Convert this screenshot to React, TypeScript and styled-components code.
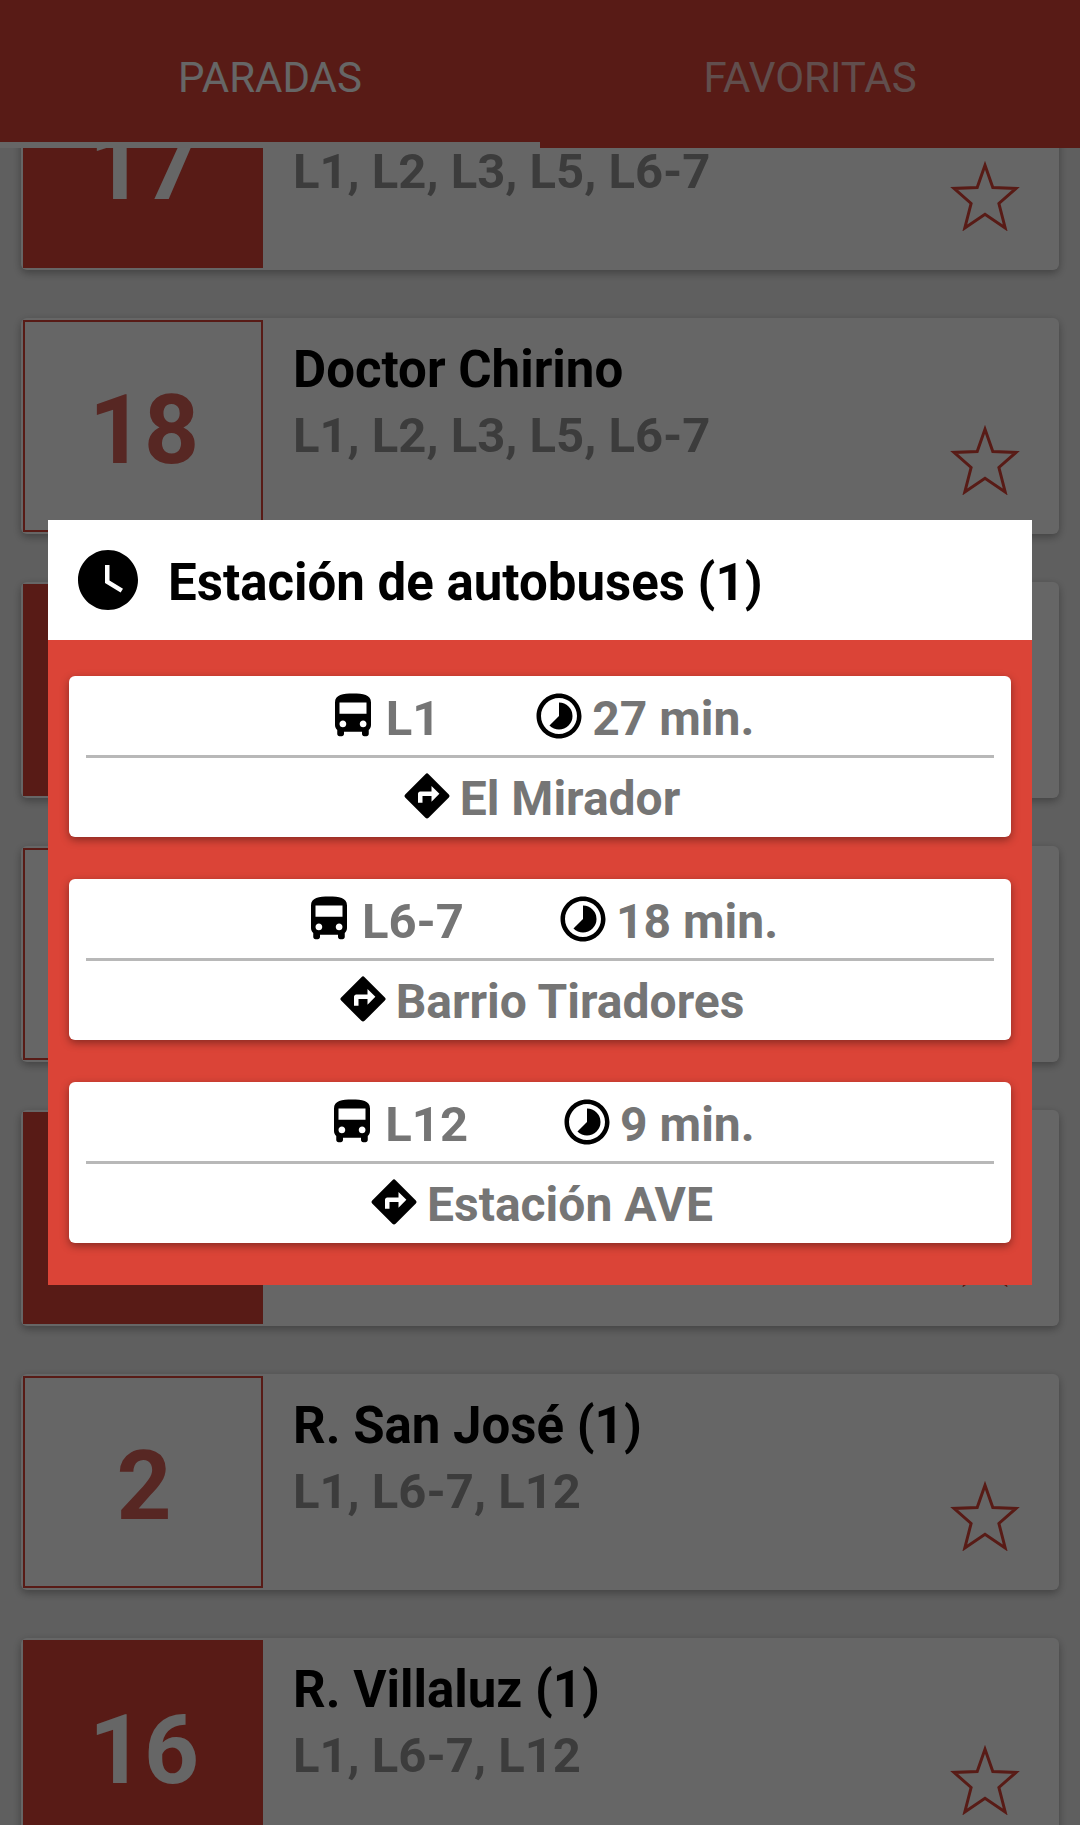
import { useLayoutEffect, useRef, useState } from 'react';
import styled, { createGlobalStyle } from 'styled-components';

const RED = '#db4437';

const GlobalStyle = createGlobalStyle`
  * {
    box-sizing: border-box;
  }
  body {
    margin: 0;
    background: #eee;
    font-family: Roboto, 'Liberation Sans', sans-serif;
  }
  h2, h3, p, ul {
    margin: 0;
    padding: 0;
  }
  button {
    border: 0;
    padding: 0;
    background: none;
    font: inherit;
    color: inherit;
    cursor: pointer;
  }
`;

const Screen = styled.div`
  display: flex;
  flex-direction: column;
  height: 100vh;
  overflow: hidden;
`;

const TabBar = styled.nav`
  display: flex;
  flex: none;
  background: ${RED};
`;

const Tab = styled.button<{ $active: boolean }>`
  flex: 1;
  height: 148px;
  padding-top: 14px;
  border-bottom: 6px solid ${({ $active }) => ($active ? '#fff' : RED)};
  color: ${({ $active }) => ($active ? '#fff' : 'rgba(255, 255, 255, 0.7)')};
  font-size: 42px;
  line-height: 48px;
  text-transform: uppercase;
`;

const StopList = styled.ul`
  display: flex;
  flex: 1;
  flex-direction: column;
  gap: 48px;
  min-height: 0;
  padding: 24px 21px;
  overflow-y: auto;
  scrollbar-width: none;
  list-style: none;
`;

const StopCard = styled.li`
  display: flex;
  flex: none;
  height: 216px;
  padding: 2px;
  border-radius: 6px;
  background: #fff;
  box-shadow: 0 3px 8px rgba(0, 0, 0, 0.32);
`;

const StopNumber = styled.div<{ $filled: boolean }>`
  display: flex;
  flex: none;
  align-items: center;
  justify-content: center;
  width: 240px;
  padding: 8px 0 0 2px;
  border: 2px solid ${RED};
  background: ${({ $filled }) => ($filled ? RED : '#fff')};
  color: ${({ $filled }) => ($filled ? '#fff' : '#d96259')};
  font-size: 96px;
  font-weight: 700;
`;

const StopInfo = styled.div`
  display: flex;
  flex: 1;
  flex-direction: column;
  gap: 8px;
  min-width: 0;
  padding: 20px 0 0 30px;
  font-weight: 700;
`;

const StopName = styled.h3`
  min-height: 60px;
  font-size: 51px;
  line-height: 60px;
`;

const StopLines = styled.p`
  color: #979797;
  font-size: 49px;
  line-height: 56px;
`;

const StarButton = styled.button`
  align-self: flex-end;
  flex: none;
  height: 70px;
  margin: 0 37px 37px 0;
`;

const Backdrop = styled.div`
  position: fixed;
  inset: 0;
  display: flex;
  align-items: center;
  justify-content: center;
  padding: 0 48px 20px;
  background: rgba(0, 0, 0, 0.6);
`;

const Dialog = styled.section`
  flex: 1;
  background: ${RED};
`;

const DialogHeader = styled.header`
  display: flex;
  align-items: center;
  gap: 24px;
  height: 120px;
  padding: 0 24px;
  background: #fff;
`;

const DialogTitle = styled.h2`
  padding-top: 5px;
  font-size: 51px;
  font-weight: 700;
  line-height: 60px;
`;

const Arrivals = styled.ul`
  display: flex;
  flex-direction: column;
  gap: 42px;
  padding: 36px 21px 42px;
  list-style: none;
`;

const ArrivalCard = styled.li`
  padding: 1px 17px 3px;
  border-radius: 6px;
  background: #fff;
  box-shadow: 0 3px 8px rgba(0, 0, 0, 0.38);
`;

const ArrivalRow = styled.div<{ $divided?: boolean }>`
  display: flex;
  align-items: center;
  justify-content: center;
  gap: 92px;
  height: ${({ $divided }) => ($divided ? 81 : 76)}px;
  border-bottom: ${({ $divided }) => ($divided ? '3px solid #b8b8b8' : '0')};
`;

const Fact = styled.span`
  display: flex;
  align-items: center;
  gap: 6px;
`;

const FactText = styled.span`
  padding-top: 5px;
  color: #757575;
  font-size: 48px;
  font-weight: 700;
  line-height: 56px;
  white-space: nowrap;
`;

const LineText = styled(FactText)`
  font-size: 49px;
`;

const Icon = ({ d, size = 54 }: { d: string; size?: number }) => (
  <svg width={size} height={size} viewBox="0 0 24 24" fill="#000" aria-hidden="true">
    <path d={d} />
  </svg>
);

const CLOCK =
  'M12 2C6.5 2 2 6.5 2 12s4.500 10 10 10 10-4.500 10-10S17.500 2 12 2zm4.200 14.200L11 13V7h1.500v5.200l4.500 2.700-.800 1.300z';
const BUS =
  'M4 16c0 .88.39 1.670 1 2.220V20c0 .55.45 1 1 1h1c.55 0 1-.45 1-1v-1h8v1c0 .55.45 1 1 1h1c.55 0 1-.45 1-1v-1.780c.61-.55 1-1.340 1-2.220V6c0-3.500-3.580-4-8-4s-8 .5-8 4v10zm3.500 1c-.83 0-1.500-.67-1.500-1.500S6.670 14 7.500 14s1.500.67 1.500 1.500S8.330 17 7.500 17zm9 0c-.83 0-1.500-.67-1.500-1.500s.67-1.500 1.500-1.500 1.500.67 1.500 1.500-.67 1.500-1.500 1.500zm1.500-6H6V6h12v5z';
const TIMELAPSE =
  'M16.240 7.760A5.974 5.974 0 0 0 12 6v6l-4.240 4.240c2.340 2.340 6.140 2.340 8.490 0a5.990 5.990 0 0 0-.01-8.480zM12 2C6.480 2 2 6.480 2 12s4.480 10 10 10 10-4.480 10-10S17.520 2 12 2zm0 18c-4.420 0-8-3.580-8-8s3.580-8 8-8 8 3.580 8 8-3.580 8-8 8z';
const DIRECTIONS =
  'M21.710 11.290l-9-9a.996.996 0 0 0-1.410 0l-9 9a.996.996 0 0 0 0 1.410l9 9c.39.39 1.020.39 1.410 0l9-9a.996.996 0 0 0 0-1.410zM14 14.500V12h-4v3H8v-4c0-.55.45-1 1-1h5V7.500l3.500 3.500-3.500 3.500z';

const StarIcon = () => (
  <svg width="70" height="70" viewBox="0 0 70 70" aria-hidden="true">
    <path
      d="M35 4.300L42.800 26.600L66 27.400L48.900 42.500L55.200 67L35 53.200L14.800 67L21.100 42.500L4 27.400L27.200 26.600Z"
      fill="none"
      stroke={RED}
      strokeWidth="3"
      strokeMiterlimit="10"
    />
  </svg>
);

const stops = [
  { id: 'a', number: '17', name: '', lines: 'L1, L2, L3, L5, L6-7', filled: true },
  { id: 'b', number: '18', name: 'Doctor Chirino', lines: 'L1, L2, L3, L5, L6-7', filled: false },
  { id: 'c', number: '', name: '', lines: '', filled: true },
  { id: 'd', number: '', name: '', lines: '', filled: false },
  { id: 'e', number: '', name: '', lines: '', filled: true },
  { id: 'f', number: '2', name: 'R. San José (1)', lines: 'L1, L6-7, L12', filled: false },
  { id: 'g', number: '16', name: 'R. Villaluz (1)', lines: 'L1, L6-7, L12', filled: true },
];

const arrivals = [
  { line: 'L1', wait: '27 min.', destination: 'El Mirador' },
  { line: 'L6-7', wait: '18 min.', destination: 'Barrio Tiradores' },
  { line: 'L12', wait: '9 min.', destination: 'Estación AVE' },
];

const tabs = ['Paradas', 'Favoritas'];

const SCROLL_START = 118;

export default function App() {
  const [active, setActive] = useState(0);
  const list = useRef<HTMLUListElement>(null);

  useLayoutEffect(() => {
    if (list.current) list.current.scrollTop = SCROLL_START;
  }, []);

  return (
    <>
      <GlobalStyle />
      <Screen>
        <TabBar>
          {tabs.map((tab, i) => (
            <Tab key={tab} $active={i === active} onClick={() => setActive(i)}>
              {tab}
            </Tab>
          ))}
        </TabBar>
        <StopList ref={list}>
          {stops.map((stop) => (
            <StopCard key={stop.id}>
              <StopNumber $filled={stop.filled}>{stop.number}</StopNumber>
              <StopInfo>
                <StopName>{stop.name}</StopName>
                <StopLines>{stop.lines}</StopLines>
              </StopInfo>
              <StarButton aria-label="Favorita">
                <StarIcon />
              </StarButton>
            </StopCard>
          ))}
        </StopList>
      </Screen>
      <Backdrop>
        <Dialog role="dialog" aria-labelledby="dialog-title">
          <DialogHeader>
            <Icon d={CLOCK} size={72} />
            <DialogTitle id="dialog-title">Estación de autobuses (1)</DialogTitle>
          </DialogHeader>
          <Arrivals>
            {arrivals.map(({ line, wait, destination }) => (
              <ArrivalCard key={line}>
                <ArrivalRow $divided>
                  <Fact>
                    <Icon d={BUS} />
                    <LineText>{line}</LineText>
                  </Fact>
                  <Fact>
                    <Icon d={TIMELAPSE} />
                    <FactText>{wait}</FactText>
                  </Fact>
                </ArrivalRow>
                <ArrivalRow>
                  <Fact>
                    <Icon d={DIRECTIONS} />
                    <FactText>{destination}</FactText>
                  </Fact>
                </ArrivalRow>
              </ArrivalCard>
            ))}
          </Arrivals>
        </Dialog>
      </Backdrop>
    </>
  );
}
